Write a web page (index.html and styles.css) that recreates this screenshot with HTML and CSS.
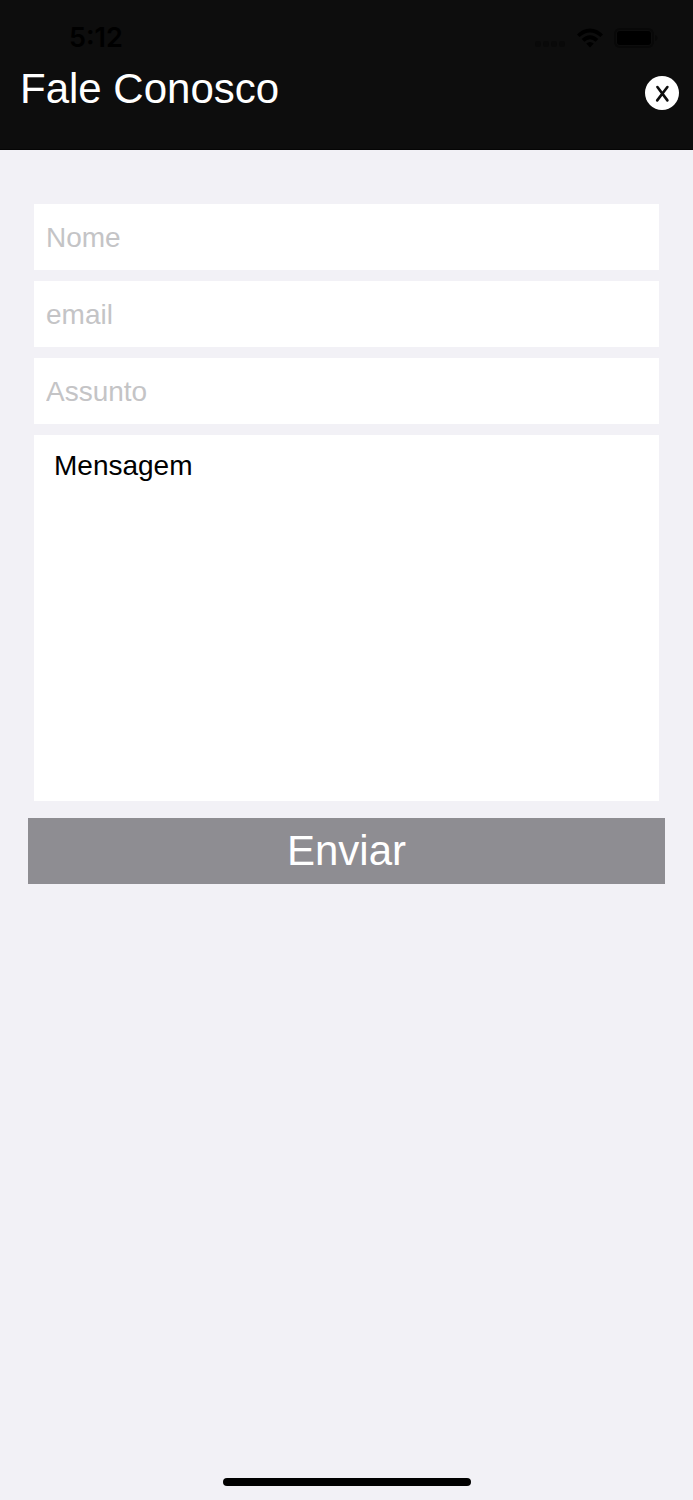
FILE: index.html
```html
<!DOCTYPE html>
<html lang="pt-BR">
<head>
<meta charset="utf-8">
<meta name="viewport" content="width=device-width, initial-scale=1">
<title>Fale Conosco</title>
<link rel="stylesheet" href="styles.css">
</head>
<body class="screen">
<header class="header">
  <div class="status-bar">
    <span class="status-time">5:12</span>
    <div class="status-icons">
      <svg class="icon-signal" viewBox="0 0 32 8" aria-hidden="true">
        <circle cx="4" cy="4" r="3"/><circle cx="12" cy="4" r="3"/><circle cx="20" cy="4" r="3"/><circle cx="28" cy="4" r="3"/>
      </svg>
      <svg class="icon-wifi" viewBox="0 0 26 20" aria-hidden="true">
        <path d="M0 6.4Q5.6 0.4 13 0.4T26 6.4L23.4 9.1Q18.8 4.4 13 4.4T2.6 9.1Z"/>
        <path d="M4.7 11.1Q8.4 7.3 13 7.3T21.3 11.1L18.6 13.8Q16 11.2 13 11.2T7.4 13.8Z"/>
        <path d="M9.2 15.6Q13 12.4 16.8 15.6L13 19.4Z"/>
      </svg>
      <svg class="icon-battery" viewBox="0 0 44 20" aria-hidden="true">
        <rect class="battery-shell" x="1" y="1" width="38" height="18" rx="5"/>
        <rect x="3" y="3" width="34" height="14" rx="3"/>
        <path class="battery-tip" d="M41 7Q43.5 8 43.5 10T41 13Z"/>
      </svg>
    </div>
  </div>
  <div class="title-bar">
    <h1 class="title">Fale Conosco</h1>
    <button class="close" type="button" aria-label="Fechar">
      <svg viewBox="0 0 34 34" aria-hidden="true">
        <path d="M12.4 11L22.4 24.4M22.4 11L12.2 24.4"/>
      </svg>
    </button>
  </div>
</header>
<main class="content">
  <form class="form">
    <div class="fields">
      <input class="field" type="text" placeholder="Nome" aria-label="Nome">
      <input class="field" type="email" placeholder="email" aria-label="email">
      <input class="field" type="text" placeholder="Assunto" aria-label="Assunto">
      <textarea class="field message" aria-label="Mensagem">Mensagem</textarea>
    </div>
    <button class="submit" type="submit">Enviar</button>
  </form>
</main>
<footer class="footer"><div class="home-indicator"></div></footer>
</body>
</html>
```
FILE: styles.css
```css
* {
  box-sizing: border-box;
}

.screen {
  display: flex;
  flex-direction: column;
  min-height: 100vh;
  margin: 0;
  background: #f2f1f6;
  font-family: "Liberation Sans", Arial, sans-serif;
}

.header {
  padding: 24px 14px 36px 20px;
  background: #0d0d0d;
  border-bottom: 1px solid #050505;
}

.status-bar {
  display: flex;
  align-items: center;
  justify-content: space-between;
  height: 28px;
  padding: 0 21px 0 49px;
}

.status-time {
  color: #000;
  font-family: Inter, sans-serif;
  font-size: 27px;
  font-weight: 600;
  line-height: 28px;
}

.status-icons {
  display: flex;
  align-items: center;
  gap: 11px;
}

.icon-signal {
  align-self: flex-end;
  width: 32px;
  height: 8px;
  fill: #090909;
}

.icon-wifi {
  width: 26px;
  height: 20px;
}

.icon-battery {
  width: 44px;
  height: 20px;
}

.battery-shell {
  fill: none;
  stroke: #080808;
  stroke-width: 2;
}

.battery-tip {
  fill: #080808;
}

.title-bar {
  display: flex;
  align-items: center;
  justify-content: space-between;
  padding-top: 13px;
}

.title {
  margin: 0;
  color: #fff;
  font-size: 42px;
  font-weight: 400;
  line-height: 48px;
}

.close {
  width: 34px;
  height: 34px;
  margin-top: 8px;
  padding: 0;
  border: 0;
  border-radius: 50%;
  background: #fff;
}

.close svg {
  display: block;
  fill: none;
  stroke: #0d0d0d;
  stroke-width: 2.6;
  stroke-linecap: round;
}

.content {
  flex: 1;
  padding: 54px 28px;
}

.form {
  display: flex;
  flex-direction: column;
  gap: 17px;
}

.fields {
  display: flex;
  flex-direction: column;
  gap: 11px;
  padding: 0 6px;
}

.field {
  width: 100%;
  height: 66px;
  padding: 2px 12px 0;
  border: 0;
  border-radius: 0;
  outline: 0;
  background: #fff;
  color: #000;
  font-family: inherit;
  font-size: 28px;
}

.field::placeholder {
  color: #c4c4c6;
  opacity: 1;
}

.message {
  display: block;
  height: 366px;
  padding: 14px 20px;
  line-height: 33px;
  resize: none;
}

.submit {
  height: 66px;
  padding: 0;
  border: 0;
  background: #8e8d92;
  color: #fff;
  font-family: inherit;
  font-size: 42px;
  line-height: 48px;
}

.footer {
  display: flex;
  justify-content: center;
  padding-bottom: 14px;
}

.home-indicator {
  width: 248px;
  height: 8px;
  border-radius: 4px;
  background: #000;
}
```
